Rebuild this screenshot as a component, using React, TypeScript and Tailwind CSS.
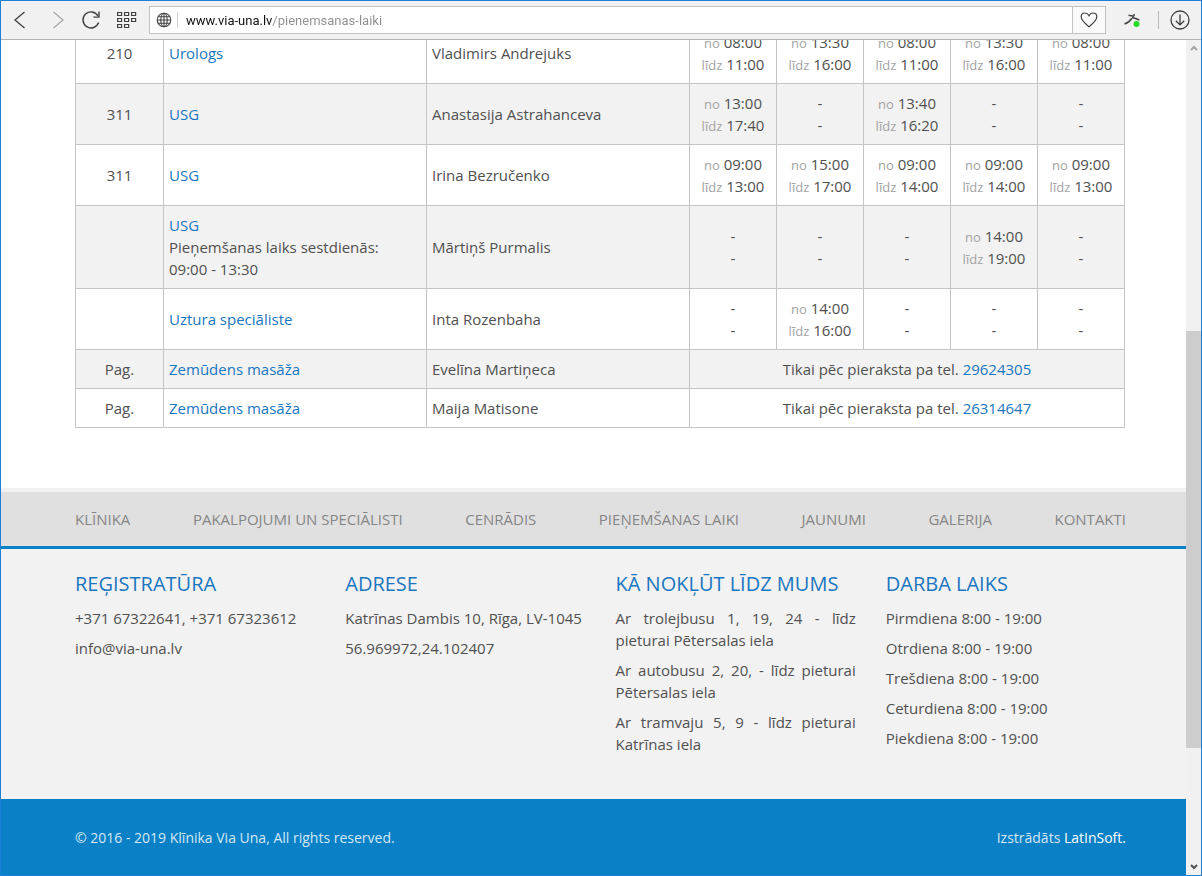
import { Fragment, type ReactNode } from "react"

type Slot = [string, string] | null

type Row = {
    room: string
    service: string
    note?: string[]
    doctor: string
    slots?: Slot[]
    phone?: string
}

const rows: Row[] = [
    {
        room: "210",
        service: "Urologs",
        doctor: "Vladimirs Andrejuks",
        slots: [["08:00", "11:00"], ["13:30", "16:00"], ["08:00", "11:00"], ["13:30", "16:00"], ["08:00", "11:00"]],
    },
    {
        room: "311",
        service: "USG",
        doctor: "Anastasija Astrahanceva",
        slots: [["13:00", "17:40"], null, ["13:40", "16:20"], null, null],
    },
    {
        room: "311",
        service: "USG",
        doctor: "Irina Bezručenko",
        slots: [["09:00", "13:00"], ["15:00", "17:00"], ["09:00", "14:00"], ["09:00", "14:00"], ["09:00", "13:00"]],
    },
    {
        room: "",
        service: "USG",
        note: ["Pieņemšanas laiks sestdienās:", "09:00 - 13:30"],
        doctor: "Mārtiņš Purmalis",
        slots: [null, null, null, ["14:00", "19:00"], null],
    },
    {
        room: "",
        service: "Uztura speciāliste",
        doctor: "Inta Rozenbaha",
        slots: [null, ["14:00", "16:00"], null, null, null],
    },
    { room: "Pag.", service: "Zemūdens masāža", doctor: "Evelīna Martiņeca", phone: "29624305" },
    { room: "Pag.", service: "Zemūdens masāža", doctor: "Maija Matisone", phone: "26314647" },
]

const menu = ["Klīnika", "Pakalpojumi un speciālisti", "Cenrādis", "Pieņemšanas laiki", "Jaunumi", "Galerija", "Kontakti"]

const footerColumns = [
    { title: "Reģistratūra", lines: ["+371 67322641, +371 67323612", "info@via-una.lv"] },
    { title: "Adrese", lines: ["Katrīnas Dambis 10, Rīga, LV-1045", "56.969972,24.102407"] },
    {
        title: "Kā nokļūt līdz mums",
        lines: [
            "Ar trolejbusu 1, 19, 24 - līdz pieturai Pētersalas iela",
            "Ar autobusu 2, 20, - līdz pieturai Pētersalas iela",
            "Ar tramvaju 5, 9 - līdz pieturai Katrīnas iela",
        ],
    },
    {
        title: "Darba laiks",
        lines: [
            "Pirmdiena 8:00 - 19:00",
            "Otrdiena 8:00 - 19:00",
            "Trešdiena 8:00 - 19:00",
            "Ceturdiena 8:00 - 19:00",
            "Piekdiena 8:00 - 19:00",
        ],
    },
]

function IconButton({ label, className, children }: { label: string; className: string; children: ReactNode }) {
    return (
        <button type="button" aria-label={label} className={`flex shrink-0 items-center justify-center ${className}`}>
            {children}
        </button>
    )
}

function Toolbar() {
    return (
        <header className="flex h-[39px] shrink-0 items-center border-b border-[#b4b4b4] bg-[#f1f1f1] text-[#404040]">
            <IconButton label="Back" className="w-[38px]">
                <svg width="20" height="20" viewBox="0 0 20 20" fill="none" stroke="currentColor" strokeWidth="1.3">
                    <path d="M14.5 2 5 10l9.500 8" />
                </svg>
            </IconButton>
            <IconButton label="Forward" className="w-[38px] text-[#a8a8a8]">
                <svg width="20" height="20" viewBox="0 0 20 20" fill="none" stroke="currentColor" strokeWidth="1.3">
                    <path d="m5.500 2 9.500 8-9.500 8" />
                </svg>
            </IconButton>
            <IconButton label="Reload" className="w-7">
                <svg width="20" height="20" viewBox="0 0 20 20" fill="none" stroke="currentColor" strokeWidth="1.4">
                    <path d="M17.600 12.500A8 8 0 1 1 17 6" />
                    <path d="M18 1.500v5.600h-5.600" />
                </svg>
            </IconButton>
            <IconButton label="Speed Dial" className="w-11">
                <svg width="20" height="18" viewBox="0 0 20 18" fill="none" stroke="currentColor" strokeWidth="1.2">
                    <path d="M.6 1.500h4v3h-4zM7.600 1.500h4v3h-4zM14.600 1.500h4v3h-4zM.6 7.500h4v3h-4zM7.600 7.500h4v3h-4zM14.600 7.500h4v3h-4zM.6 13.500h4v3h-4zM7.600 13.500h4v3h-4z" />
                </svg>
            </IconButton>
            <div className="flex h-7 min-w-0 flex-1 items-center border border-[#c2c2c2] bg-white">
                <IconButton label="Site information" className="w-7 border-r border-[#d0d0d0]">
                    <svg width="16" height="16" viewBox="0 0 16 16" fill="none" stroke="currentColor" strokeWidth="1.1">
                        <circle cx="8" cy="8" r="6.8" />
                        <ellipse cx="8" cy="8" rx="3.2" ry="6.8" />
                        <path d="M8 1.200v13.600M1.200 8h13.600M2.200 4.700h11.600M2.200 11.300h11.600" />
                    </svg>
                </IconButton>
                <input
                    type="text"
                    aria-label="Address"
                    defaultValue="www.via-una.lv/pienemsanas-laiki"
                    className="ml-2 h-6 min-w-0 flex-1 bg-[linear-gradient(90deg,#111_86px,#8f8f8f_86px)] bg-clip-text font-[Roboto,sans-serif] text-[13px] text-transparent outline-none"
                />
                <IconButton label="Bookmark" className="h-full w-[33px] border-l border-[#c2c2c2] bg-[#fafafa]">
                    <svg width="18" height="18" viewBox="0 0 18 18" fill="none" stroke="currentColor" strokeWidth="1.2">
                        <path d="M9 15.800C5 12.600 1.200 9.600 1.200 5.800 1.200 3.500 2.900 2 4.900 2 6.700 2 8.100 3 9 4.700 9.900 3 11.300 2 13.100 2c2 0 3.700 1.500 3.700 3.800 0 3.800-3.800 6.800-7.800 10z" />
                    </svg>
                </IconButton>
            </div>
            <IconButton label="Extension" className="w-[52px]">
                <svg width="18" height="18" viewBox="0 0 18 18" fill="none">
                    <path d="M1.500 13C4.500 12.200 6.500 10.500 9 7.200" stroke="#444" strokeWidth="1.500" />
                    <path d="M5.500 4.200c2 .3 3.500 .7 5 .9l1-2M9 6.500c2.500 .6 5 1.200 7.500 2.600" stroke="#444" strokeWidth="1.500" />
                    <circle cx="13.500" cy="13" r="3" fill="#24dc24" />
                </svg>
            </IconButton>
            <div className="h-[18px] w-px bg-[#b8b8b8]" />
            <IconButton label="Downloads" className="w-[42px]">
                <svg width="20" height="20" viewBox="0 0 20 20" fill="none" stroke="currentColor" strokeWidth="1.3">
                    <circle cx="10" cy="10" r="9" />
                    <path d="M10 4.500v10.300M5.800 10.700l4.200 4.200 4.200-4.200" />
                </svg>
            </IconButton>
        </header>
    )
}

function Time({ slot }: { slot: Slot }) {
    if (!slot) return <>-<br />-</>
    return (
        <>
            <span className="text-[13px] leading-none text-[#a3a3a3]">no</span> {slot[0]}
            <br />
            <span className="text-[13px] leading-none text-[#a3a3a3]">līdz</span> {slot[1]}
        </>
    )
}

function Schedule() {
    return (
        <table className="-mt-[18px] w-full table-fixed border-collapse [&_td]:border [&_td]:border-[#c4c4c4] [&_td]:px-[5px] [&_td]:py-2">
            <colgroup>
                <col className="w-[88px]" />
                <col />
                <col />
                <col span={5} className="w-[87px]" />
            </colgroup>
            <tbody>
                {rows.map((row, i) => (
                    <tr key={i} className="even:bg-[#f2f2f2]">
                        <td className="text-center">{row.room}</td>
                        <td>
                            <a href="#" className="text-[#1a76bf]">{row.service}</a>
                            {row.note?.map((line) => (
                                <Fragment key={line}>
                                    <br />
                                    {line}
                                </Fragment>
                            ))}
                        </td>
                        <td>{row.doctor}</td>
                        {row.slots?.map((slot, day) => (
                            <td key={day} className="text-center">
                                <Time slot={slot} />
                            </td>
                        ))}
                        {row.phone && (
                            <td colSpan={5} className="text-center">
                                Tikai pēc pieraksta pa tel. <a href={`tel:${row.phone}`} className="text-[#1a76bf]">{row.phone}</a>
                            </td>
                        )}
                    </tr>
                ))}
            </tbody>
        </table>
    )
}

function Scrollbar() {
    return (
        <div className="flex w-[15px] shrink-0 flex-col bg-[#f1f1f1]">
            <IconButton label="Scroll up" className="h-4 text-[#a5a5a5]">
                <svg width="8" height="6" viewBox="0 0 8 6" fill="none" stroke="currentColor" strokeWidth="2">
                    <path d="m1 5 3-3 3 3" />
                </svg>
            </IconButton>
            <div className="flex-[275]" />
            <div className="flex-[417] bg-[#cdcdcd]" />
            <div className="flex-[111]" />
            <IconButton label="Scroll down" className="h-4 text-[#505050]">
                <svg width="8" height="6" viewBox="0 0 8 6" fill="none" stroke="currentColor" strokeWidth="2">
                    <path d="m1 1 3 3 3-3" />
                </svg>
            </IconButton>
        </div>
    )
}

export default function App() {
    return (
        <div className="flex h-screen flex-col border border-[#1b80d8] font-['Open_Sans',sans-serif] text-[15px] leading-[22px] text-[#505050]">
            <Toolbar />
            <div className="flex min-h-0 flex-1">
                <div className="flex min-w-0 flex-1 flex-col overflow-hidden bg-white">
                    {/* Reception hours */}
                    <main className="pr-[61px] pb-[60px] pl-[74px]">
                        <Schedule />
                    </main>

                    {/* Menu */}
                    <nav className="flex justify-between border-t-4 border-b-3 border-t-[#f2f2f2] border-b-[#0a80c6] bg-[#e0e0e0] py-4 pr-[60px] pl-[74px] text-[#868686] uppercase">
                        {menu.map((item) => (
                            <a key={item} href="#">{item}</a>
                        ))}
                    </nav>

                    {/* Contacts */}
                    <section className="grid grid-cols-4 gap-[30px] bg-[#f2f2f2] pt-6 pr-[60px] pb-11 pl-[74px]">
                        {footerColumns.map((column) => (
                            <div key={column.title} className="text-justify">
                                <h3 className="mb-3 text-left text-xl leading-[22px] whitespace-nowrap text-[#1a76bf] uppercase">{column.title}</h3>
                                <div className="space-y-2">
                                    {column.lines.map((line) => (
                                        <p key={line}>{line}</p>
                                    ))}
                                </div>
                            </div>
                        ))}
                    </section>

                    <footer className="flex flex-1 justify-between bg-[#0a80c6] pt-7 pr-[60px] pb-6 pl-[74px] text-sm leading-[22px] text-[#d3e8f5]">
                        <p>© 2016 - 2019 Klīnika Via Una, All rights reserved.</p>
                        <p>
                            Izstrādāts <a href="#" className="text-white">LatInSoft.</a>
                        </p>
                    </footer>
                </div>
                <Scrollbar />
            </div>
        </div>
    )
}
